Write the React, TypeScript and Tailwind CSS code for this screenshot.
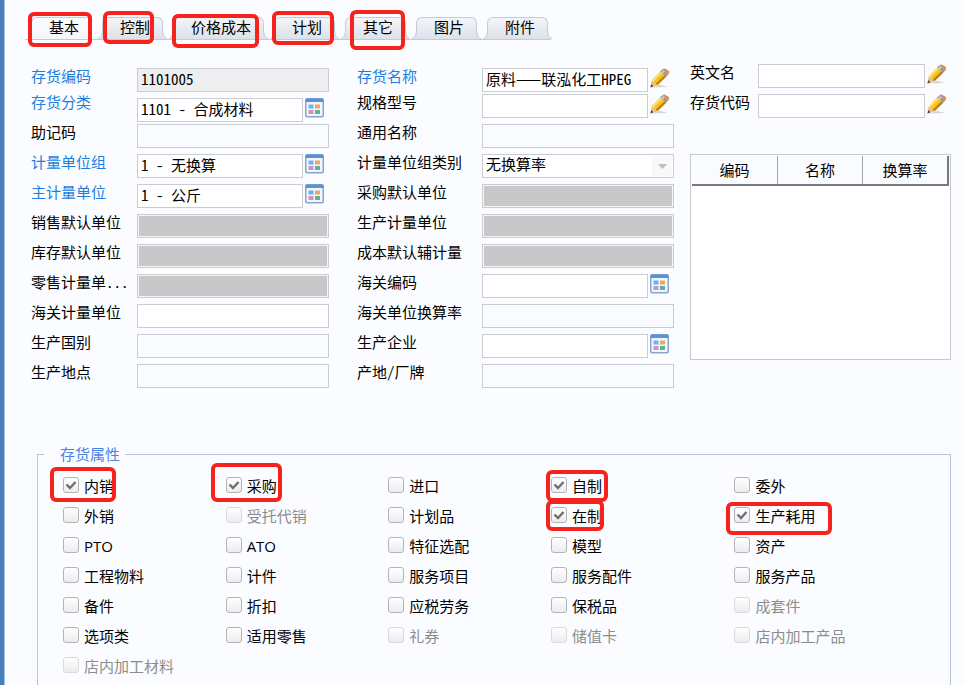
import type { ReactNode } from 'react';
import clsx from 'clsx';

type Kind = 'plain' | 'readonly' | 'lookup' | 'edit' | 'blocked' | 'white' | 'select';

type FieldDef = {
  id: string;
  label: string;
  kind?: Kind;
  value?: string;
  required?: boolean;
  rowClass?: string;
};

type CheckDef = {
  label: string;
  checked?: boolean;
  disabled?: boolean;
  // Classes that size the red marker around the item
  mark?: string;
};

const tabs = [
  { label: '基本', mark: '-left-1 -right-px -top-1.5 h-[35px]' },
  { label: '控制', mark: 'left-0 right-2 -top-[7px] h-[33px]' },
  { label: '价格成本', mark: '-left-0.5 right-1 -top-1 h-[34px]' },
  { label: '计划', mark: '-left-[3px] right-0 -top-[7px] h-[34px]' },
  { label: '其它', mark: 'left-1 right-0 -top-2 h-[40px]' },
  { label: '图片' },
  { label: '附件' },
];

const firstColumn: FieldDef[] = [
  { id: 'code', label: '存货编码', kind: 'readonly', value: '1101005', required: true, rowClass: 'h-[26px]' },
  { id: 'category', label: '存货分类', kind: 'lookup', value: '1101 - 合成材料', required: true, rowClass: 'h-[30px] items-end pb-0.5' },
  { id: 'mnemonic', label: '助记码' },
  { id: 'unitGroup', label: '计量单位组', kind: 'lookup', value: '1 - 无换算', required: true },
  { id: 'mainUnit', label: '主计量单位', kind: 'lookup', value: '1 - 公斤', required: true },
  { id: 'saleUnit', label: '销售默认单位', kind: 'blocked' },
  { id: 'stockUnit', label: '库存默认单位', kind: 'blocked' },
  { id: 'retailUnit', label: '零售计量单...', kind: 'blocked' },
  { id: 'customsUnit', label: '海关计量单位', kind: 'white' },
  { id: 'country', label: '生产国别' },
  { id: 'place', label: '生产地点' },
];

const secondColumn: FieldDef[] = [
  { id: 'name', label: '存货名称', kind: 'edit', value: '原料——联泓化工HPEG', required: true, rowClass: 'h-[26px]' },
  { id: 'spec', label: '规格型号', kind: 'edit' },
  { id: 'commonName', label: '通用名称' },
  { id: 'groupType', label: '计量单位组类别', kind: 'select', value: '无换算率' },
  { id: 'purchaseUnit', label: '采购默认单位', kind: 'blocked' },
  { id: 'produceUnit', label: '生产计量单位', kind: 'blocked' },
  { id: 'costUnit', label: '成本默认辅计量', kind: 'blocked' },
  { id: 'customsCode', label: '海关编码', kind: 'lookup' },
  { id: 'customsRate', label: '海关单位换算率' },
  { id: 'company', label: '生产企业', kind: 'lookup' },
  { id: 'brand', label: '产地/厂牌' },
];

const thirdColumn: FieldDef[] = [
  { id: 'englishName', label: '英文名', kind: 'edit' },
  { id: 'stockCode', label: '存货代码', kind: 'edit' },
];

const checks: CheckDef[] = [
  { label: '内销', checked: true, mark: '-left-[13px] -top-2.5 w-[66px] h-[35px]' },
  { label: '采购', checked: true, mark: '-left-[15px] -top-[14px] w-[71px] h-[39px]' },
  { label: '进口' },
  { label: '自制', checked: true, mark: '-left-[5px] -top-[7px] w-[62px] h-[32px]' },
  { label: '委外' },
  { label: '外销' },
  { label: '受托代销', disabled: true },
  { label: '计划品' },
  { label: '在制', checked: true, mark: '-left-[5px] -top-[7px] w-[58px] h-[31px]' },
  { label: '生产耗用', checked: true, mark: '-left-2 -top-[5px] w-[106px] h-[33px]' },
  { label: 'PTO' },
  { label: 'ATO' },
  { label: '特征选配' },
  { label: '模型' },
  { label: '资产' },
  { label: '工程物料' },
  { label: '计件' },
  { label: '服务项目' },
  { label: '服务配件' },
  { label: '服务产品' },
  { label: '备件' },
  { label: '折扣' },
  { label: '应税劳务' },
  { label: '保税品' },
  { label: '成套件', disabled: true },
  { label: '选项类' },
  { label: '适用零售' },
  { label: '礼券', disabled: true },
  { label: '储值卡', disabled: true },
  { label: '店内加工产品', disabled: true },
  { label: '店内加工材料', disabled: true },
];

function Mark({ className }: { className: string }) {
  return <span className={clsx('pointer-events-none absolute z-10 rounded-md border-4 border-[#f5231b]', className)} />;
}

function LookupIcon() {
  return (
    <svg width="19" height="20" viewBox="0 0 19 20">
      <rect x="0.75" y="0.75" width="17.5" height="18" rx="1.5" fill="#f1f6fc" stroke="#86a5cf" strokeWidth="1.5" />
      <path d="M0.5 4V2Q0.5 0.5 2 0.5H17Q18.5 0.5 18.5 2V4Z" fill="#5b92d2" />
      <rect x="3.5" y="6.5" width="5" height="4" fill="#6db1f5" />
      <rect x="10" y="6.5" width="5" height="4" fill="#efa75f" />
      <rect x="3.5" y="12" width="5" height="4" fill="#cf94b8" />
      <rect x="10" y="12" width="5" height="4" fill="#5fae9f" />
    </svg>
  );
}

function PencilIcon() {
  return (
    <svg width="21" height="21" viewBox="0 0 21 21">
      <path d="M2 20L10 17L19 19.5Z" fill="#d5d5d8" />
      <path d="M0.5 20L1.8 12.5L7.8 17.6Z" fill="#e6be8c" />
      <path d="M0.5 20L1.2 16.6L3.6 18.7Z" fill="#3d3a35" />
      <path d="M1.8 12.5L10.6 3.2L17 8.6L7.8 17.6Z" fill="#f8c21c" />
      <path d="M1.8 12.5L10.6 3.2L12.4 4.7L3.6 14Z" fill="#fbe06a" />
      <path d="M6 16.1L15.2 7.1L17 8.6L7.8 17.6Z" fill="#c07d1a" />
      <path d="M10.6 3.2L13 0.9L19.2 6.2L17 8.6Z" fill="#8f9ba1" />
      <path d="M11.6 4L14 1.7L15.5 3L13.2 5.4Z" fill="#c9d2d6" />
      <path d="M13 0.9Q14.6 -0.4 16.4 0.4L19.8 2.6Q20.9 4.4 19.2 6.2Z" fill="#df8b4c" />
    </svg>
  );
}

const boxBase = 'h-6 w-full min-w-0 flex-1 border border-[#c9cdd3] px-[3px] pb-1 text-[15px] text-black outline-none';

function Control({ id, kind = 'plain', value }: { id: string; kind?: Kind; value?: string }) {
  if (kind === 'select') {
    return (
      <div className="relative flex min-w-0 flex-1">
        <select id={id} className={clsx(boxBase, 'appearance-none bg-white leading-4')}>
          <option>{value}</option>
        </select>
        <span className="pointer-events-none absolute inset-y-0.5 right-0.5 flex w-5 items-center justify-center bg-[#f8f8f9]">
          <svg width="9" height="5" viewBox="0 0 9 5">
            <path d="M0 0H9L4.5 5Z" fill="#bdbdbd" />
          </svg>
        </span>
      </div>
    );
  }

  const hasButton = kind === 'lookup' || kind === 'edit';
  return (
    <div className={clsx('flex min-w-0 flex-1 gap-0.5', hasButton && 'pr-1')}>
      <input
        id={id}
        type="text"
        defaultValue={value}
        readOnly={kind === 'readonly'}
        disabled={kind === 'blocked'}
        className={clsx(
          boxBase,
          kind === 'plain' && 'bg-[#fafbff]',
          kind === 'readonly' && 'bg-[#eeeeee]',
          kind === 'blocked' && 'bg-[#c8c8c8] shadow-[inset_0_0_0_1px_#f4f5f8]',
          (hasButton || kind === 'white') && 'bg-white',
        )}
      />
      {hasButton && (
        <button type="button" aria-label={kind === 'lookup' ? '选择' : '编辑'} className="flex w-5 shrink-0 items-start">
          {kind === 'lookup' ? <LookupIcon /> : <PencilIcon />}
        </button>
      )}
    </div>
  );
}

function FieldColumn({ fields, labelClass }: { fields: FieldDef[]; labelClass: string }) {
  return (
    <div>
      {fields.map((f) => (
        <div key={f.id} className={clsx('flex', f.rowClass ?? 'h-[30px] items-start')}>
          <label
            htmlFor={f.id}
            className={clsx('shrink-0 self-start whitespace-nowrap leading-[15px]', labelClass, f.required ? 'text-[#1c7fe0]' : 'text-black')}
          >
            {f.label}
          </label>
          <Control id={f.id} kind={f.kind} value={f.value} />
        </div>
      ))}
    </div>
  );
}

// Curved foot where a tab meets the line under the tabs
function TabFoot({ className }: { className: string }) {
  return (
    <svg className={clsx('absolute bottom-0', className)} width="5" height="8" viewBox="0 0 5 8">
      <path d="M5 0V8H0Q4 7 4.5 0Z" fill="#dce2e9" />
      <path d="M0 7.5Q4 6.5 4.5 0" fill="none" stroke="#c0ccd8" />
    </svg>
  );
}

function Tab({ children, mark, active }: { children: ReactNode; mark?: string; active?: boolean }) {
  return (
    <button
      type="button"
      role="tab"
      aria-selected={!!active}
      className={clsx(
        'relative h-[22px] rounded-t-md border border-b-0 border-[#c0ccd8] bg-linear-to-b pb-[3px] pl-[17px] pr-3 leading-[18px]',
        active ? 'from-[#fbfcff] to-[#f4f6fa]' : 'from-[#f3f5f8] to-[#dce2e9]',
      )}
    >
      {!active && <TabFoot className="-left-[5px]" />}
      {!active && <TabFoot className="-right-[5px] -scale-x-100" />}
      {children}
      {mark && <Mark className={mark} />}
    </button>
  );
}

function CheckItem({ item, id }: { item: CheckDef; id: string }) {
  return (
    <div className="relative flex h-[30px] items-start gap-[5px]">
      <span className="relative flex size-4 shrink-0">
        <input
          id={id}
          type="checkbox"
          defaultChecked={item.checked}
          disabled={item.disabled}
          className="peer size-4 appearance-none rounded-[3px] border border-[#b4b4b6] bg-linear-to-b from-white to-[#ececee] disabled:border-[#dadadc]"
        />
        <svg
          className="pointer-events-none absolute inset-0 hidden peer-checked:block"
          width="16"
          height="16"
          viewBox="0 0 16 16"
        >
          <path d="M3.5 7.5L7 11L12.5 5" fill="none" stroke="#6f6f72" strokeWidth="2.4" />
        </svg>
      </span>
      <label htmlFor={id} className={clsx('whitespace-nowrap leading-[18px]', item.disabled ? 'text-[#8c8c8e]' : 'text-black')}>
        {item.label}
      </label>
      {item.mark && <Mark className={item.mark} />}
    </div>
  );
}

export default function App() {
  return (
    <main className="flex min-h-screen flex-col border-l-4 border-[#4a7ebb] bg-[#fbfcff] pl-[21px] pr-3.5 pt-[17px] font-['Noto_Sans_Mono_CJK_SC','Noto_Sans_CJK_SC',sans-serif] text-[15px] text-black shadow-[inset_1px_0_0_#a9c3e2]">
      {/* Tabs */}
      <div role="tablist" className="flex gap-2.5 self-start border-b border-[#c0ccd8] pl-1.5 pr-[3px]">
        {tabs.map((tab, i) => (
          <Tab key={tab.label} mark={tab.mark} active={i === 0}>
            {tab.label}
          </Tab>
        ))}
      </div>

      {/* Fields */}
      <div className="mt-6 grid grid-cols-[326fr_333fr_261fr] pl-1.5">
        <div className="pr-7 pt-1">
          <FieldColumn fields={firstColumn} labelClass="w-[106px]" />
        </div>
        <div className="pr-4 pt-1">
          <FieldColumn fields={secondColumn} labelClass="w-[125px]" />
        </div>
        <div>
          <FieldColumn fields={thirdColumn} labelClass="w-[68px]" />
          <div className="mt-[30px] h-[206px] border border-[#c5c8ce] bg-white p-px">
            <table className="w-full table-fixed border-collapse">
              <thead>
                <tr className="h-[29px] border-b-2 border-r-2 border-[#77797d] bg-[#fafbff]">
                  <th className="border-r border-[#a5a8ad] font-normal">编码</th>
                  <th className="border-r border-[#a5a8ad] font-normal">名称</th>
                  <th className="font-normal">换算率</th>
                </tr>
              </thead>
            </table>
          </div>
        </div>
      </div>

      {/* Attributes */}
      <fieldset className="ml-3 mt-[50px] flex-1 border border-b-0 border-[#b7c7d9] pl-[25px]">
        <legend className="-ml-[19px] pl-4 pr-[5px] leading-5 text-[#4a83e6]">存货属性</legend>
        <div className="grid grid-cols-[163fr_163fr_163fr_184fr_216fr] pt-[13px] font-['Open_Sans','Noto_Sans_CJK_SC',sans-serif]">
          {checks.map((item, i) => (
            <CheckItem key={item.label} item={item} id={`attr-${i}`} />
          ))}
        </div>
      </fieldset>
    </main>
  );
}
